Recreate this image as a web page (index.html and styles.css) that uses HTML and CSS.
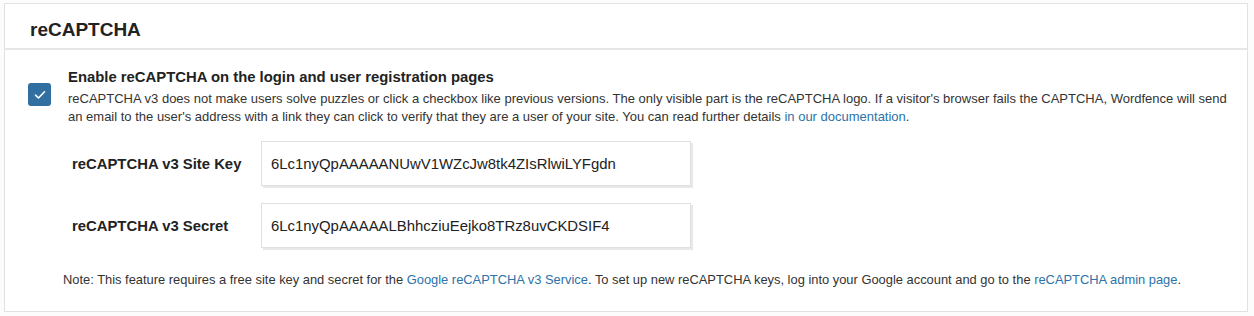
FILE: index.html
```html
<!DOCTYPE html>
<html>
<head>
<meta charset="utf-8">
<link rel="stylesheet" href="styles.css">
</head>
<body>
<div class="panel">
  <div class="panel-header">reCAPTCHA</div>
  <div class="panel-body">
    <div class="option">
      <div class="check-col">
        <span class="checkbox">
          <svg width="12" height="10" viewBox="0 0 12 10"><path d="M1.5 5.2 L4.5 8 L10.5 1.8" fill="none" stroke="#fff" stroke-width="1.6" stroke-linecap="round" stroke-linejoin="round"/></svg>
        </span>
      </div>
      <div class="option-text">
        <div class="option-title">Enable reCAPTCHA on the login and user registration pages</div>
        <div class="option-desc">reCAPTCHA v3 does not make users solve puzzles or click a checkbox like previous versions. The only visible part is the reCAPTCHA logo. If a visitor's browser fails the CAPTCHA, Wordfence will send an email to the user's address with a link they can click to verify that they are a user of your site. You can read further details <a href="#">in our documentation</a>.</div>
      </div>
    </div>
    <div class="fields">
      <div class="field">
        <label class="field-label">reCAPTCHA v3 Site Key</label>
        <div class="field-input">6Lc1nyQpAAAAANUwV1WZcJw8tk4ZIsRlwiLYFgdn</div>
      </div>
      <div class="field">
        <label class="field-label">reCAPTCHA v3 Secret</label>
        <div class="field-input">6Lc1nyQpAAAAALBhhcziuEejko8TRz8uvCKDSIF4</div>
      </div>
    </div>
    <div class="note">Note: This feature requires a free site key and secret for the <a href="#">Google reCAPTCHA v3 Service</a>. To set up new reCAPTCHA keys, log into your Google account and go to the <a href="#">reCAPTCHA admin page</a>.</div>
  </div>
</div>
</body>
</html>
```
FILE: styles.css
```css
html, body {
  margin: 0;
  padding: 0;
  background: #fcfcfc;
}
body {
  font-family: "Liberation Sans", Arial, sans-serif;
  color: #2b2b2b;
  padding: 3px 4px 0 4px;
}
a {
  color: #2d72a8;
  text-decoration: none;
}
.panel {
  background: #fff;
  border: 1px solid #e2e2e2;
  width: 1244px;
  box-sizing: border-box;
}
.panel-header {
  font-size: 19px;
  font-weight: bold;
  color: #222;
  padding: 0 25px;
  height: 44px;
  line-height: 51px;
  border-bottom: 2px solid #e6e6e6;
  box-sizing: content-box;
}
.panel-body {
  padding: 18px 10px 22px 23px;
}
.option {
  display: flex;
  gap: 17px;
}
.check-col {
  padding-top: 15px;
}
.checkbox {
  display: flex;
  align-items: center;
  justify-content: center;
  width: 23px;
  height: 23px;
  background: #306fa0;
  border-radius: 3px;
}
.option-text {
  max-width: 1163px;
}
.option-title {
  font-size: 14.85px;
  font-weight: bold;
  color: #222;
  line-height: 18px;
  margin-bottom: 4px;
}
.option-desc {
  font-size: 13px;
  line-height: 18px;
  color: #333;
}
.fields {
  padding-left: 44px;
  margin-top: 15px;
  display: flex;
  flex-direction: column;
  gap: 17px;
}
.field {
  display: flex;
  align-items: center;
}
.field-label {
  width: 189px;
  font-size: 14.85px;
  font-weight: bold;
  color: #222;
}
.field-input {
  width: 430px;
  height: 45px;
  box-sizing: border-box;
  border: 1px solid #e0e0e0;
  box-shadow: 2px 2px 0 #e8e8e8;
  padding: 0 9px;
  display: flex;
  align-items: center;
  font-size: 14.9px;
  color: #222;
}
.note {
  margin-top: 23px;
  padding-left: 35px;
  font-size: 12.9px;
  line-height: 18px;
  color: #333;
}
```
